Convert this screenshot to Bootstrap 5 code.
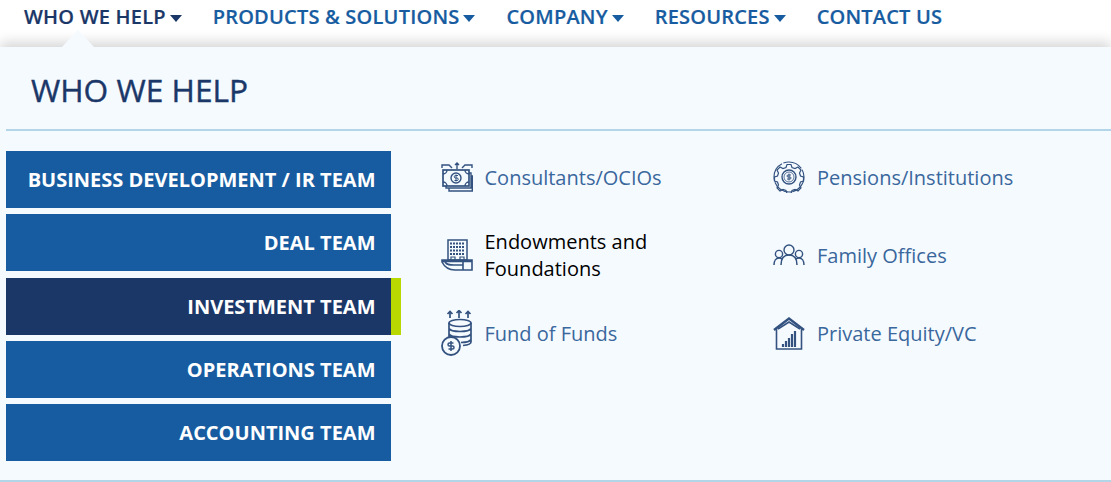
<!DOCTYPE html>
<html lang="en">
<head>
    <meta charset="UTF-8">
    <title>Who We Help</title>
    <link href="https://cdn.jsdelivr.net/npm/bootstrap@5.3.0/dist/css/bootstrap.min.css" rel="stylesheet">
    <style>
        html, body {
            height: 482px;
            overflow: hidden;
        }
        body {
            background: #fff;
            font-family: "Open Sans", sans-serif;
        }
        .top-links {
            height: 47px;
            padding: 4px 0 0 24px;
            gap: 31px;
        }
        .top-link {
            position: relative;
            height: 26px;
            color: #175ca0;
            font-size: 20px;
            font-weight: 600;
            line-height: 26px;
            letter-spacing: .2px;
            text-decoration: none;
            white-space: nowrap;
            -webkit-text-stroke: 0.2px currentColor;
        }
        .top-link.is-open {
            color: #1b3768;
        }
        .caret-down {
            display: inline-block;
            margin-left: 4px;
            vertical-align: 2px;
            border-left: 6.5px solid transparent;
            border-right: 6.5px solid transparent;
            border-top: 7px solid currentColor;
        }
        .panel-arrow {
            position: absolute;
            top: 26px;
            left: 38px;
            border-left: 16px solid transparent;
            border-right: 16px solid transparent;
            border-bottom: 17px solid #f5faff;
        }
        .menu-panel {
            height: 435px;
            padding-left: 6px;
            background: #f5faff;
            border-bottom: 2px solid #b3d5e8;
            box-shadow: 0 -5px 12px rgba(0, 0, 0, .16);
        }
        .panel-title {
            height: 84px;
            margin: 0;
            padding: 23px 0 0 25px;
            color: #1b3768;
            font-size: 31.7px;
            font-weight: 400;
            line-height: 40px;
            border-bottom: 2px solid #b3d5e8;
            -webkit-text-stroke: 0.4px currentColor;
        }
        .panel-body {
            padding-top: 20px;
        }
        .team-col {
            width: 385px;
            gap: 6.25px;
        }
        .team-btn {
            position: relative;
            height: 57px;
            padding: 0 15.5px 0 0;
            border-radius: 0;
            border: 0;
            background: #175ca0;
            color: #fff;
            font-size: 20px;
            font-weight: 700;
            line-height: 57px;
            text-align: right;
            white-space: nowrap;
        }
        .team-btn.is-active {
            background: #1b3768;
        }
        .team-btn.is-active::after {
            content: "";
            position: absolute;
            top: 0;
            bottom: 0;
            left: 100%;
            width: 10px;
            background: #b9d800;
        }
        .seg-grid {
            display: grid;
            grid-template-columns: 332.5px 300px;
            grid-auto-rows: 78px;
            align-content: start;
            margin-left: 49px;
            margin-top: -13px;
        }
        .seg-item {
            color: #3a679c;
            font-size: 20px;
            line-height: 27px;
            text-decoration: none;
        }
        .seg-item.is-hover {
            color: #000;
        }
        .seg-icon {
            flex: 0 0 45px;
            width: 45px;
            padding-left: .5px;
        }
        .seg-icon svg {
            display: block;
            fill: none;
            stroke: #33527f;
            stroke-width: 1.4;
        }
        .seg-text {
            width: 190px;
            margin-left: -.5px;
        }
    </style>
</head>
<body>
    <nav class="top-links d-flex">
        <a href="#" class="top-link is-open">WHO WE HELP<span class="caret-down"></span><span class="panel-arrow"></span></a>
        <a href="#" class="top-link">PRODUCTS &amp; SOLUTIONS<span class="caret-down"></span></a>
        <a href="#" class="top-link">COMPANY<span class="caret-down"></span></a>
        <a href="#" class="top-link">RESOURCES<span class="caret-down"></span></a>
        <a href="#" class="top-link">CONTACT US</a>
    </nav>

    <div class="menu-panel">
        <h2 class="panel-title">WHO WE HELP</h2>
        <div class="panel-body d-flex">
            <div class="team-col d-flex flex-column">
                <a href="#" class="btn team-btn">BUSINESS DEVELOPMENT / IR TEAM</a>
                <a href="#" class="btn team-btn">DEAL TEAM</a>
                <a href="#" class="btn team-btn is-active">INVESTMENT TEAM</a>
                <a href="#" class="btn team-btn">OPERATIONS TEAM</a>
                <a href="#" class="btn team-btn">ACCOUNTING TEAM</a>
            </div>
            <div class="seg-grid">
                <a href="#" class="seg-item d-flex align-items-center">
                    <span class="seg-icon">
                        <svg width="32" height="30" viewBox="0 0 32 30">
                            <path d="M1 6V3h7l3 3M31 6V3h-7l-3 3M16 7V1M14 3l2-2 2 2M9 4l2 2M23 4l-2 2"/>
                            <rect x="2" y="8" width="26" height="16" stroke-width="1.700"/>
                            <path d="M28 11h2v15H5v-2M30 14h1.300v15H8v-3"/>
                            <circle cx="15" cy="16" r="5"/>
                            <path d="M13.500 18.500h2.500a1.200 1.200 0 0 0 0-2.500h-1.500a1.200 1.200 0 0 1 0-2.500h2.500M15 12.500v7" stroke-width="1"/>
                            <path d="M2 12a4 4 0 0 0 4-4M2 20a4 4 0 0 1 4 4M28 12a4 4 0 0 1-4-4M28 20a4 4 0 0 0-4 4"/>
                        </svg>
                    </span>
                    <span class="seg-text">Consultants/OCIOs</span>
                </a>
                <a href="#" class="seg-item d-flex align-items-center">
                    <span class="seg-icon">
                        <svg width="32" height="32" viewBox="0 0 32 32">
                            <circle cx="16" cy="16" r="15" stroke-dasharray="20 1.500" stroke-width="1.100"/>
                            <path d="M14 3.500h4l1 3 3 1 3-1.500 3 3-1.500 3 1 3 3 1v4l-3 1-1 3 1.500 3-3 3-3-1.500-3 1-1 3h-4l-1-3-3-1-3 1.500-3-3 1.500-3-1-3-3-1v-4l3-1 1-3L4 9l3-3 3 1.500 3-1z" stroke-width="1.200"/>
                            <circle cx="16" cy="16" r="7"/>
                            <circle cx="16" cy="16" r="5" stroke-width=".8"/>
                            <path d="M14 18h3a1 1 0 0 0 0-2h-2a1 1 0 0 1 0-2h3M16 12.500v7" stroke-width="1"/>
                        </svg>
                    </span>
                    <span class="seg-text">Pensions/Institutions</span>
                </a>
                <a href="#" class="seg-item is-hover d-flex align-items-center">
                    <span class="seg-icon">
                        <svg width="32" height="33" viewBox="0 0 32 33">
                            <rect x="7" y="1" width="19" height="20" stroke-width="1.500"/>
                            <path d="M9 4.500h15M9 8h15M9 11.500h15M9 15h15" stroke-width="2.200" stroke-dasharray="2 1"/>
                            <path d="M10 21v-3h4v3M19 21v-3h4v3" stroke-width="1.200"/>
                            <path d="M1 21h30v1.500H1zM1 23c3 6 7 8 13 8h17v-8.500M22 23v8M4 23c2 3 5 3 9 3h9" stroke-width="1.600"/>
                        </svg>
                    </span>
                    <span class="seg-text">Endowments and Foundations</span>
                </a>
                <a href="#" class="seg-item d-flex align-items-center">
                    <span class="seg-icon">
                        <svg width="32" height="22" viewBox="0 0 32 22">
                            <circle cx="16" cy="6" r="5"/>
                            <circle cx="6" cy="10" r="3.600"/>
                            <circle cx="26" cy="10" r="3.600"/>
                            <path d="M8 21c0-6 2-10 8-10s8 4 8 10M1 21c0-4 2-7 5-7 1 0 2 .3 3 1M31 21c0-4-2-7-5-7-1 0-2 .3-3 1" stroke-width="1.500"/>
                        </svg>
                    </span>
                    <span class="seg-text">Family Offices</span>
                </a>
                <a href="#" class="seg-item d-flex align-items-center">
                    <span class="seg-icon">
                        <svg width="32" height="46" viewBox="0 0 32 46">
                            <path d="M9 8V1.500M6.500 4 9 1.500 11.500 4M18 8V.5M15.500 3 18 .5 20.500 3M27 8V1.500M24.500 4 27 1.500 29.500 4" stroke-width="1.700"/>
                            <ellipse cx="19" cy="13" rx="11" ry="3.500" stroke-width="1.700"/>
                            <path d="M8 13v15M30 13v19c0 2-3 3-8 3.500M8 18.500c1 2 5 3 11 3s10-1 11-3M8 24c1 2 5 3 11 3s10-1 11-3M20 32.500c5 0 9-1 10-3" stroke-width="1.700"/>
                            <circle cx="10" cy="36" r="9" fill="#f5faff" stroke-width="1.800"/>
                            <path d="M7.500 39h4a1.500 1.500 0 0 0 0-3h-3a1.500 1.500 0 0 1 0-3h4M10 31v10" stroke-width="1.500"/>
                        </svg>
                    </span>
                    <span class="seg-text">Fund of Funds</span>
                </a>
                <a href="#" class="seg-item d-flex align-items-center">
                    <span class="seg-icon">
                        <svg width="32" height="33" viewBox="0 0 32 33">
                            <path d="M1 13 16 1.500 31 13" stroke-width="2.400"/>
                            <path d="M5 12 16 5l11 7M3.500 12v20h25V12" stroke-width="1.600"/>
                            <path d="M10 30v-3M13 30v-6M16 30v-9M19 30V17M22 30V14" stroke-width="2.200"/>
                        </svg>
                    </span>
                    <span class="seg-text">Private Equity/VC</span>
                </a>
            </div>
        </div>
    </div>

    <script src="https://cdn.jsdelivr.net/npm/bootstrap@5.3.0/dist/js/bootstrap.bundle.min.js"></script>
</body>
</html>
